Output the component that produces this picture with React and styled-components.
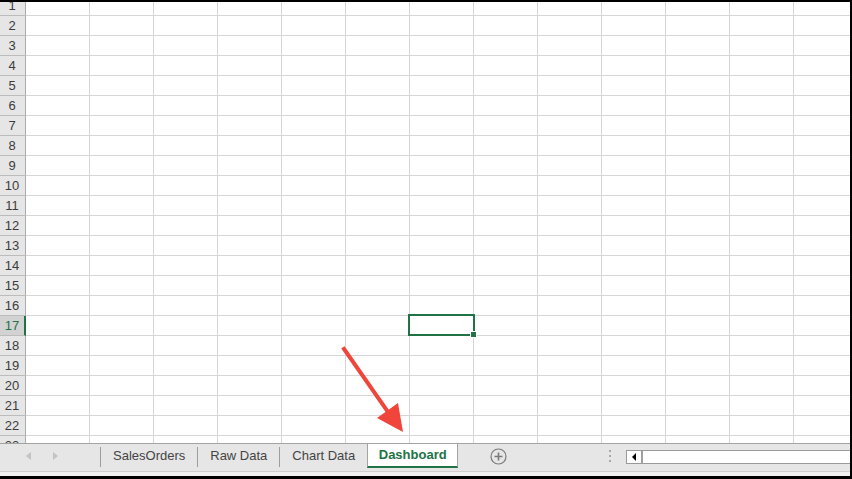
import React from 'react';
import styled, { createGlobalStyle } from 'styled-components';

const GlobalStyle = createGlobalStyle`
  body {
    margin: 0;
    overflow: hidden;
    font-family: "Liberation Sans", Arial, sans-serif;
  }
`;

const Frame = styled.div`
  width: 852px;
  height: 479px;
  box-sizing: border-box;
  background: #000;
  padding: 2px 2px 3px 0;
  display: flex;
  flex-direction: column;
`;

const Sheet = styled.div`
  position: relative;
  flex: 1;
  overflow: hidden;
  background: #fff;
`;

const Rows = styled.div`
  margin-top: -6px;
`;

const Row = styled.div`
  display: grid;
  grid-template-columns: 26px repeat(13, 64px);
  height: 20px;
`;

const RowHead = styled.div`
  box-sizing: border-box;
  height: 20px;
  background: ${p => (p.active ? '#d2d2d2' : '#e6e6e6')};
  border-right: ${p => (p.active ? '2px solid #217346' : '1px solid #ababab')};
  border-bottom: 1px solid #bcbcbc;
  color: ${p => (p.active ? '#217346' : '#3c3c3c')};
  font-size: 13px;
  line-height: 19px;
  text-align: center;
  padding-right: ${p => (p.active ? '0' : '1px')};
`;

const Cell = styled.div`
  box-sizing: border-box;
  height: 20px;
  border-right: 1px solid #d6d6d6;
  border-bottom: 1px solid #d6d6d6;
`;

const Selection = styled.div`
  position: absolute;
  left: 408px;
  top: 312px;
  width: 67px;
  height: 22px;
  box-sizing: border-box;
  border: 2px solid #217346;
`;

const FillHandle = styled.div`
  position: absolute;
  right: -4px;
  bottom: -4px;
  width: 5px;
  height: 5px;
  background: #217346;
  border: 1px solid #fff;
`;

const ArrowLayer = styled.svg`
  position: absolute;
  left: 0;
  top: 0;
  pointer-events: none;
`;

const TabBar = styled.div`
  height: 28px;
  box-sizing: border-box;
  background: #e6e6e6;
  border-top: 1px solid #a3a3a3;
  display: flex;
  align-items: flex-start;
`;

const NavArea = styled.div`
  width: 100px;
  height: 24px;
  display: flex;
  align-items: center;
  padding-left: 26px;
  box-sizing: border-box;
  gap: 22px;
`;

const NavArrow = styled.span`
  width: 0;
  height: 0;
  border-top: 4px solid transparent;
  border-bottom: 4px solid transparent;
  ${p => (p.dir === 'left'
    ? 'border-right: 5px solid #c3c3c3;'
    : 'border-left: 5px solid #c3c3c3;')}
`;

const Divider = styled.div`
  width: 1px;
  height: 20px;
  margin-top: 3px;
  background: #9d9d9d;
`;

const Tab = styled.div`
  height: 24px;
  line-height: 24px;
  padding: 0 ${p => p.pad || 12}px;
  font-size: 13px;
  color: #444;
  white-space: nowrap;
`;

const ActiveTab = styled.div`
  height: 24px;
  box-sizing: border-box;
  width: 91px;
  background: #fff;
  border-left: 1px solid #a3a3a3;
  border-right: 1px solid #a3a3a3;
  border-bottom: 2px solid #217346;
  line-height: 22px;
  text-align: center;
  font-size: 13px;
  font-weight: bold;
  color: #217346;
`;

const PlusButton = styled.svg`
  margin-left: 32px;
  margin-top: 4px;
`;

const Spacer = styled.div`
  flex: 1;
`;

const Dots = styled.div`
  width: 4px;
  margin-right: 13px;
  margin-top: 6px;
  display: flex;
  flex-direction: column;
  gap: 3px;
  span {
    width: 2px;
    height: 2px;
    background: #a8a8a8;
  }
`;

const ScrollBar = styled.div`
  width: 224px;
  height: 14px;
  margin-top: 6px;
  box-sizing: border-box;
  display: flex;
  border: 1px solid #9a9a9a;
  border-right: none;
  background: #fff;
`;

const ScrollButton = styled.div`
  width: 14px;
  border-right: 2px solid #a0a0a0;
  display: flex;
  align-items: center;
  justify-content: center;
  &::before {
    content: '';
    border-top: 4px solid transparent;
    border-bottom: 4px solid transparent;
    border-right: 4px solid #000;
  }
`;

const BottomStrip = styled.div`
  height: 5px;
  box-sizing: border-box;
  background: #f1f1f1;
  border-top: 1px solid #cfcfcf;
`;

const rows = Array.from({ length: 23 }, (_, i) => i + 1);
const cols = Array.from({ length: 13 });

export default function App() {
  return (
    <>
      <GlobalStyle />
      <Frame>
        <Sheet>
          <Rows>
            {rows.map(r => (
              <Row key={r}>
                <RowHead active={r === 17}>{r}</RowHead>
                {cols.map((_, c) => <Cell key={c} />)}
              </Row>
            ))}
          </Rows>
          <Selection>
            <FillHandle />
          </Selection>
          <ArrowLayer width="852" height="441" viewBox="0 2 852 441">
            <line x1="344" y1="349" x2="388" y2="412" stroke="#f1443a" strokeWidth="4" strokeLinecap="square" />
            <polygon points="377,418 398,403 403,432" fill="#f1443a" />
          </ArrowLayer>
        </Sheet>
        <TabBar>
          <NavArea>
            <NavArrow dir="left" />
            <NavArrow dir="right" />
          </NavArea>
          <Divider />
          <Tab>SalesOrders</Tab>
          <Divider />
          <Tab>Raw Data</Tab>
          <Divider />
          <Tab>Chart Data</Tab>
          <ActiveTab>Dashboard</ActiveTab>
          <PlusButton width="17" height="17" viewBox="0 0 17 17">
            <circle cx="8.5" cy="8.5" r="7.5" fill="none" stroke="#7a7a7a" strokeWidth="1.2" />
            <path d="M8.5 4.5v8M4.5 8.5h8" stroke="#7a7a7a" strokeWidth="1.6" />
          </PlusButton>
          <Spacer />
          <Dots>
            <span />
            <span />
            <span />
          </Dots>
          <ScrollBar>
            <ScrollButton />
          </ScrollBar>
        </TabBar>
        <BottomStrip />
      </Frame>
    </>
  );
}
